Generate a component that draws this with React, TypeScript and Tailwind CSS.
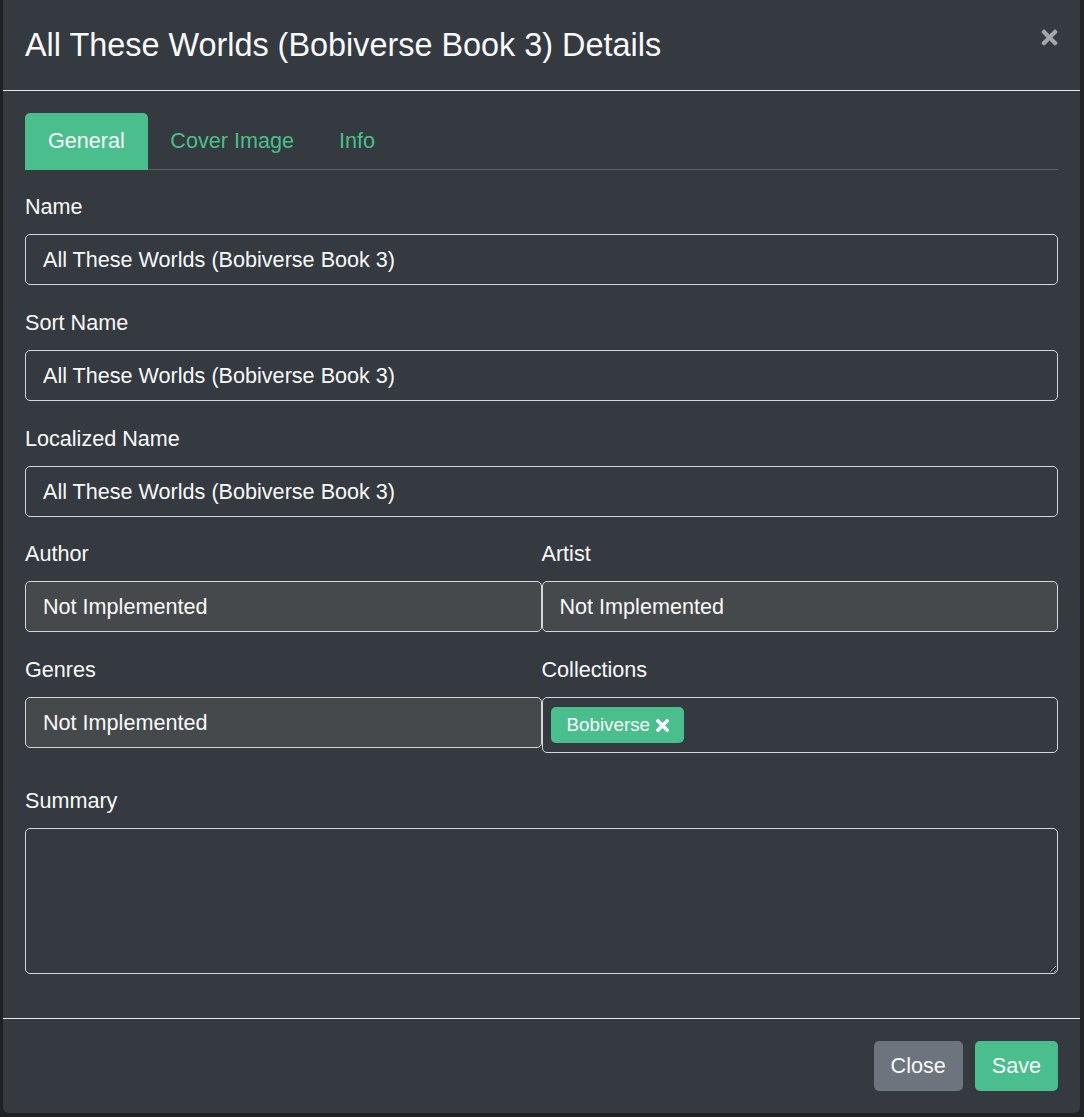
import { FaTimes } from "react-icons/fa";

const fieldLabel = "block text-[21.6px] leading-[32px] mb-[11px] text-[#f8f9fa]";
const textInput =
  "w-full h-[51px] rounded-[5px] border border-[#d3d7db] bg-[#343a40] px-[17px] pt-[1px] text-[21.6px] leading-[32px] text-[#f8f9fa] outline-none";
const lockedInput =
  "w-full h-[51px] rounded-[5px] border border-[#d3d7db] bg-[#46494c] px-[17px] pt-[1px] text-[21.6px] leading-[32px] text-[#f8f9fa] outline-none";

const title = "All These Worlds (Bobiverse Book 3)";

export default function App() {
  return (
    <div className="min-h-screen bg-[#1f2225] pl-[3px] font-['Liberation_Sans',Arial,sans-serif]">
      <div className="w-[1077px] h-[1113px] bg-[#343a40] rounded-b-[6px] flex flex-col text-[#f8f9fa]">
        {/* header */}
        <div className="h-[91px] border-b border-[#e4e7ea] px-[22px] pt-[21px] flex justify-between items-start">
          <h4 className="text-[32.4px] leading-[48px] font-normal">{title} Details</h4>
          <button className="mt-[5px] mr-[-3px] text-[#a4a7aa]">
            <FaTimes size={23} />
          </button>
        </div>

        {/* body */}
        <div className="flex-1 px-[22px] pt-[22px]">
          <div className="flex h-[57px] border-b border-[#5d6267]">
            <div className="h-[57px] px-[23px] flex items-center rounded-t-[5px] bg-[#4abf8d] text-[21.6px] text-[#f8f9fa]">
              General
            </div>
            <div className="h-[57px] px-[22.5px] flex items-center text-[21.6px] text-[#4abf8d]">Cover Image</div>
            <div className="h-[57px] px-[22.5px] flex items-center text-[21.6px] text-[#4abf8d]">Info</div>
          </div>

          <div className="mt-[21px]">
            <div className="mb-[21.75px]">
              <label className={fieldLabel}>Name</label>
              <input className={textInput} defaultValue={title} />
            </div>
            <div className="mb-[21.75px]">
              <label className={fieldLabel}>Sort Name</label>
              <input className={textInput} defaultValue={title} />
            </div>
            <div className="mb-[21.75px]">
              <label className={fieldLabel}>Localized Name</label>
              <input className={textInput} defaultValue={title} />
            </div>

            <div className="grid grid-cols-2 mb-[21.75px]">
              <div>
                <label className={fieldLabel}>Author</label>
                <input className={lockedInput} defaultValue="Not Implemented" readOnly />
              </div>
              <div>
                <label className={fieldLabel}>Artist</label>
                <input className={lockedInput} defaultValue="Not Implemented" readOnly />
              </div>
            </div>

            <div className="grid grid-cols-2 items-start mb-[31.5px]">
              <div>
                <label className={fieldLabel}>Genres</label>
                <input className={lockedInput} defaultValue="Not Implemented" readOnly />
              </div>
              <div>
                <label className={fieldLabel}>Collections</label>
                <div className="h-[56px] rounded-[5px] border border-[#d3d7db] px-[8px] flex items-center">
                  <span className="h-[36px] pl-[16px] pr-[12px] rounded-[5px] bg-[#4abf8d] flex items-center gap-[3px] text-[18.8px] text-[#f8f9fa]">
                    Bobiverse
                    <FaTimes size={19} className="text-white" />
                  </span>
                </div>
              </div>
            </div>

            <div>
              <label className={fieldLabel}>Summary</label>
              <textarea className="block w-full h-[146px] rounded-[5px] border border-[#d3d7db] bg-[#343a40] px-[17px] py-[8px] text-[21.6px] text-[#f8f9fa] outline-none" />
            </div>
          </div>
        </div>

        {/* footer */}
        <div className="h-[95px] border-t border-[#e4e7ea] px-[22px] flex justify-end items-center gap-[12px]">
          <button className="h-[50px] px-[17px] rounded-[5px] bg-[#6c757d] text-[21.6px] text-[#f8f9fa]">Close</button>
          <button className="h-[50px] px-[17px] rounded-[5px] bg-[#4abf8d] text-[21.6px] text-[#f8f9fa]">Save</button>
        </div>
      </div>
    </div>
  );
}
